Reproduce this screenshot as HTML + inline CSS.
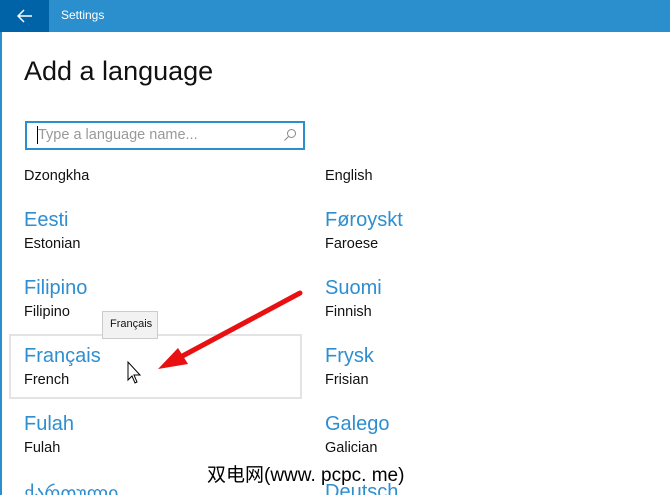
<!DOCTYPE html><html><head><style>
html,body{margin:0;width:670px;height:495px;overflow:hidden}
body{background:#fff;font-family:"Liberation Sans",sans-serif;position:relative}
.bar{position:absolute;left:0;top:0;width:670px;height:32px;background:#2b8fce}
.back{position:absolute;left:0;top:0;width:49px;height:32px;background:#0063a8}
.lb{position:absolute;left:0;top:32px;width:2px;height:463px;background:#2b8fce;z-index:5}
.t{position:absolute;white-space:nowrap}
.n{position:absolute;font-size:20px;color:#2e8ed0;white-space:nowrap}
.s{position:absolute;font-size:14.5px;color:#111;white-space:nowrap}
</style></head><body>
<div class="bar"></div><div class="back"></div><div class="lb"></div>
<svg style="position:absolute;left:17px;top:9px" width="16" height="14"><path d="M1 7H15M7 1L1 7L7 13" stroke="#fff" stroke-width="1.5" fill="none"/></svg>
<div class="t" style="left:61px;top:8px;font-size:12px;color:#fff">Settings</div>
<div class="t" style="left:24px;top:56px;font-size:27px;color:#111">Add a language</div>
<div style="position:absolute;left:25px;top:121px;width:276px;height:25px;border:2px solid #2b8fce"></div>
<div style="position:absolute;left:37px;top:126px;width:1px;height:18px;background:#000"></div>
<div class="t" style="left:38px;top:127px;font-size:14.5px;color:#999">Type a language name...</div>
<svg style="position:absolute;left:283px;top:128px" width="14" height="14"><circle cx="8.5" cy="5.5" r="4" stroke="#888" fill="none"/><path d="M5.5 8.5L1.5 12.5" stroke="#888"/></svg>
<div class="s" style="left:24px;top:168px">Dzongkha</div><div class="s" style="left:325px;top:168px">English</div>
<div class="n" style="left:24px;top:209px">Eesti</div><div class="s" style="left:24px;top:236px">Estonian</div>
<div class="n" style="left:325px;top:209px">Føroyskt</div><div class="s" style="left:325px;top:236px">Faroese</div>
<div class="n" style="left:24px;top:277px">Filipino</div><div class="s" style="left:24px;top:304px">Filipino</div>
<div class="n" style="left:325px;top:277px">Suomi</div><div class="s" style="left:325px;top:304px">Finnish</div>
<div style="position:absolute;left:9px;top:334px;width:289px;height:61px;border:2px solid #e3e3e3"></div>
<div style="position:absolute;left:102px;top:311px;width:56px;height:28px;border:1px solid #ccc;background:#f2f2f2;box-sizing:border-box"></div>
<div class="t" style="left:110px;top:318px;font-size:11px;color:#111">Français</div>
<div class="n" style="left:24px;top:345px">Français</div><div class="s" style="left:24px;top:372px">French</div>
<div class="n" style="left:325px;top:345px">Frysk</div><div class="s" style="left:325px;top:372px">Frisian</div>
<div class="n" style="left:24px;top:413px">Fulah</div><div class="s" style="left:24px;top:440px">Fulah</div>
<div class="n" style="left:325px;top:413px">Galego</div><div class="s" style="left:325px;top:440px">Galician</div>
<div class="n" style="left:24px;top:481px">ქართული</div><div class="n" style="left:325px;top:481px">Deutsch</div>
<svg style="position:absolute;left:0;top:0" width="670" height="495"><path d="M300 293L175 360" stroke="#e81010" stroke-width="5" stroke-linecap="round"/><path d="M158 369L178 348L188 364Z" fill="#e81010"/>
<path d="M128 362V380L132 376L135 383L137 382L134 375L140 375Z" fill="#fff" stroke="#000" stroke-width="1"/></svg>
<div class="t" style="left:207px;top:460px;font-size:19px;color:#000;font-family:'Liberation Sans','Noto Sans CJK SC',sans-serif;text-shadow:0 0 2px #fff,0 0 2px #fff">双电网(www. pcpc. me)</div>
</body></html>
